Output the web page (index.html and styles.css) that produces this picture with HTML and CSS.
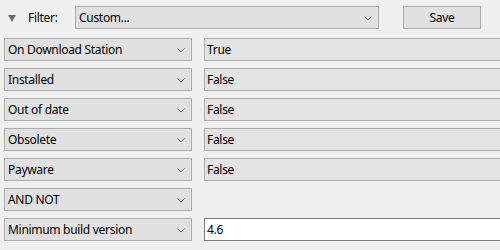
FILE: index.html
```html
<!DOCTYPE html>
<html lang="en">
<head>
    <meta charset="UTF-8">
    <title>Filter</title>
    <link rel="stylesheet" href="styles.css">
</head>
<body>
    <div class="filter-bar">
        <span class="expander"></span>
        <span class="filter-label">Filter:</span>
        <div class="combo combo-wide">
            <span>Custom...</span>
            <svg class="chevron" width="8" height="5" viewBox="0 0 8 5"><polyline points="0.5,0.5 4,4 7.5,0.5" fill="none" stroke="#707070" stroke-width="1"/></svg>
        </div>
        <button class="save-button">Save</button>
    </div>

    <div class="rules">
        <div class="combo"><span>On Download Station</span><svg class="chevron" width="8" height="5" viewBox="0 0 8 5"><polyline points="0.5,0.5 4,4 7.5,0.5" fill="none" stroke="#707070" stroke-width="1"/></svg></div>
        <div class="value">True</div>

        <div class="combo"><span>Installed</span><svg class="chevron" width="8" height="5" viewBox="0 0 8 5"><polyline points="0.5,0.5 4,4 7.5,0.5" fill="none" stroke="#707070" stroke-width="1"/></svg></div>
        <div class="value">False</div>

        <div class="combo"><span>Out of date</span><svg class="chevron" width="8" height="5" viewBox="0 0 8 5"><polyline points="0.5,0.5 4,4 7.5,0.5" fill="none" stroke="#707070" stroke-width="1"/></svg></div>
        <div class="value">False</div>

        <div class="combo"><span>Obsolete</span><svg class="chevron" width="8" height="5" viewBox="0 0 8 5"><polyline points="0.5,0.5 4,4 7.5,0.5" fill="none" stroke="#707070" stroke-width="1"/></svg></div>
        <div class="value">False</div>

        <div class="combo"><span>Payware</span><svg class="chevron" width="8" height="5" viewBox="0 0 8 5"><polyline points="0.5,0.5 4,4 7.5,0.5" fill="none" stroke="#707070" stroke-width="1"/></svg></div>
        <div class="value">False</div>

        <div class="combo"><span>AND NOT</span><svg class="chevron" width="8" height="5" viewBox="0 0 8 5"><polyline points="0.5,0.5 4,4 7.5,0.5" fill="none" stroke="#707070" stroke-width="1"/></svg></div>
        <div class="empty"></div>

        <div class="combo"><span>Minimum build version</span><svg class="chevron" width="8" height="5" viewBox="0 0 8 5"><polyline points="0.5,0.5 4,4 7.5,0.5" fill="none" stroke="#707070" stroke-width="1"/></svg></div>
        <div class="value editable">4.6</div>
    </div>
</body>
</html>
```

FILE: styles.css
```css
/* General Styles */
body {
    font-family: "Noto Sans", "Open Sans", sans-serif;
    font-size: 12px;
    letter-spacing: -0.3px;
    color: #000000;
    background-color: #f0f0f0;
    margin: 0;
    padding: 6px 0 0 4px;
    width: 496px;
    height: 244px;
    overflow: hidden;
}

/* Filter Bar */
.filter-bar {
    display: flex;
    align-items: center;
    height: 23px;
}
.expander {
    width: 0;
    height: 0;
    margin-left: 4px;
    margin-top: 1px;
    border-left: 4px solid transparent;
    border-right: 4px solid transparent;
    border-top: 7px solid #6d6d6d;
}
.filter-label {
    margin-left: 12px;
    width: 47px;
}
.combo-wide {
    width: 304px;
}
.save-button {
    margin-left: 24px;
    width: 78px;
    height: 23px;
    padding: 0;
    font-family: inherit;
    font-size: 12px;
    letter-spacing: -0.3px;
    background-color: #e1e1e1;
    border: 1px solid #adadad;
    color: #000000;
}

/* Combo Boxes */
.combo {
    box-sizing: border-box;
    display: flex;
    align-items: center;
    justify-content: space-between;
    height: 23px;
    padding: 0 6px 0 3px;
    background-color: #e1e1e1;
    border: 1px solid #adadad;
    white-space: nowrap;
}
.chevron {
    display: block;
    margin-top: 1px;
}

/* Rule Rows */
.rules {
    display: grid;
    grid-template-columns: 188px 310px;
    column-gap: 12px;
    row-gap: 7px;
    margin-top: 9px;
}
.value {
    box-sizing: border-box;
    height: 23px;
    line-height: 21px;
    padding-left: 2px;
    background-color: #e3e3e3;
    border: 1px solid #adadad;
}
.value.editable {
    background-color: #ffffff;
    border-color: #7a7a7a;
}
.empty {
    height: 23px;
}
```
